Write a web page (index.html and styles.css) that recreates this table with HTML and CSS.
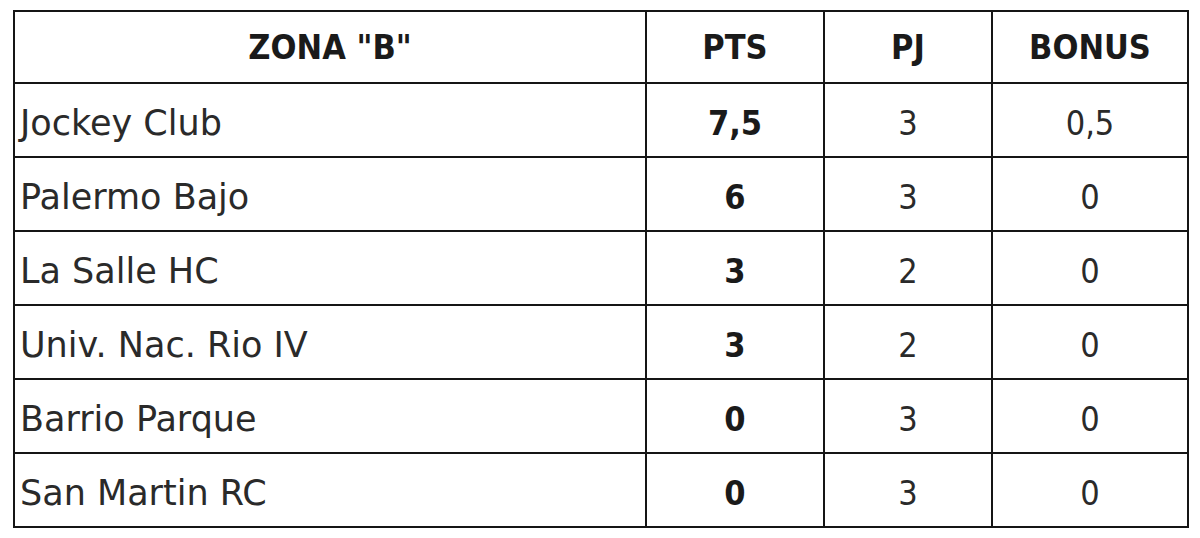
FILE: index.html
```html
<!DOCTYPE html>
<html>
<head>
<meta charset="utf-8">
<link rel="stylesheet" href="styles.css">
</head>
<body>
<table class="standings">
  <colgroup>
    <col class="c-team"><col class="c-pts"><col class="c-pj"><col class="c-bonus">
  </colgroup>
  <thead>
    <tr><th>ZONA "B"</th><th>PTS</th><th>PJ</th><th>BONUS</th></tr>
  </thead>
  <tbody>
    <tr><td class="team">Jockey Club</td><td class="pts">7,5</td><td>3</td><td>0,5</td></tr>
    <tr><td class="team">Palermo Bajo</td><td class="pts">6</td><td>3</td><td>0</td></tr>
    <tr><td class="team">La Salle HC</td><td class="pts">3</td><td>2</td><td>0</td></tr>
    <tr><td class="team">Univ. Nac. Rio IV</td><td class="pts">3</td><td>2</td><td>0</td></tr>
    <tr><td class="team">Barrio Parque</td><td class="pts">0</td><td>3</td><td>0</td></tr>
    <tr><td class="team">San Martin RC</td><td class="pts">0</td><td>3</td><td>0</td></tr>
  </tbody>
</table>
</body>
</html>
```
FILE: styles.css
```css
html, body {
  margin: 0;
  padding: 0;
  background: #ffffff;
}
body {
  padding: 10px 0 0 13px;
  font-family: "DejaVu Sans Condensed", "DejaVu Sans", sans-serif;
  color: #2a2a2a;
}
.standings {
  border-collapse: collapse;
  width: 1174px;
  table-layout: fixed;
}
.c-team { width: 632px; }
.c-pts { width: 178px; }
.c-pj { width: 168px; }
.c-bonus { width: 196px; }
.standings th,
.standings td {
  border: 2px solid #151515;
  text-align: center;
  padding: 0;
  line-height: 1;
  vertical-align: middle;
}
.standings th {
  height: 70px;
  font-weight: bold;
  font-size: 34px;
  color: #1a1a1a;
}
.standings td {
  height: 66px;
  padding-top: 6px;
  font-size: 34px;
  font-weight: normal;
}
.standings td.team {
  text-align: left;
  padding-left: 5px;
  font-family: "DejaVu Sans", sans-serif;
  font-size: 35px;
}
.standings td.pts {
  font-weight: bold;
  color: #1a1a1a;
}
```
